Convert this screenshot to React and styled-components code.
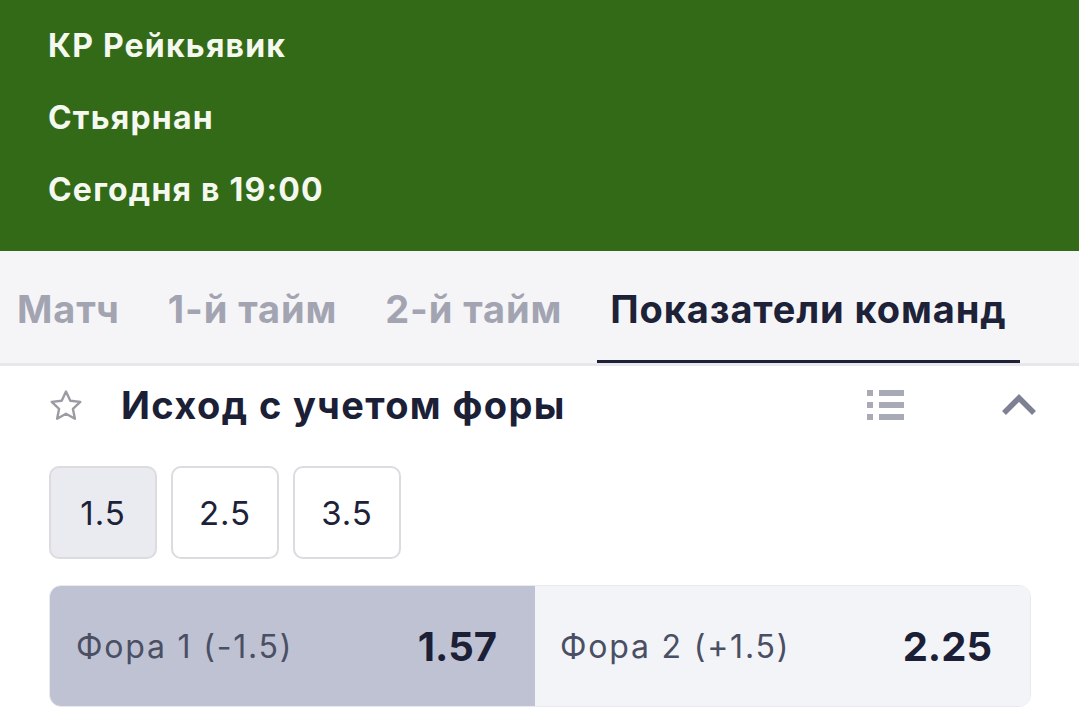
import React from "react";
import styled, { createGlobalStyle } from "styled-components";

const GlobalStyle = createGlobalStyle`
  body {
    margin: 0;
    background: #ffffff;
    font-family: "Inter", "Noto Sans", sans-serif;
    overflow: hidden;
  }
`;

const Page = styled.div`
  width: 1079px;
  height: 722px;
  overflow: hidden;
`;

const MatchHeader = styled.div`
  height: 251px;
  box-sizing: border-box;
  padding: 10px 0 0 48px;
  background: #336a18;
  color: #f4f8ef;
`;

const HeaderLine = styled.div`
  font-size: 32px;
  font-weight: 700;
  letter-spacing: 1.2px;
  line-height: 72px;
`;

const Tabs = styled.div`
  display: flex;
  gap: 22px;
  height: 112px;
  padding-left: 4px;
  background: #f5f5f7;
  border-bottom: 3px solid #e7e7ec;
`;

const Tab = styled.div`
  display: flex;
  align-items: center;
  padding: 6px 13px 0;
  font-size: 38px;
  font-weight: 700;
  letter-spacing: 0.9px;
  color: ${(p) => (p.$active ? "#1d2238" : "#a3a4b2")};
  border-bottom: 3px solid ${(p) => (p.$active ? "#1d2238" : "transparent")};
`;

const Market = styled.div`
  padding: 0 42px 0 49px;
`;

const MarketHead = styled.div`
  display: flex;
  align-items: center;
  height: 78px;
`;

const Title = styled.div`
  flex: 1;
  margin-left: 38px;
  font-size: 38px;
  font-weight: 700;
  letter-spacing: 1.4px;
  color: #1b2036;
`;

const IconButton = styled.div`
  display: flex;
  align-items: center;
  justify-content: center;
  width: ${(p) => p.$w}px;
  margin-right: ${(p) => p.$gap || 0}px;
`;

const Lines = styled.div`
  display: flex;
  gap: 14px;
  margin: 22px 0 26px;
`;

const LineButton = styled.div`
  display: flex;
  align-items: center;
  justify-content: center;
  width: 108px;
  height: 93px;
  box-sizing: border-box;
  border: 2px solid #dcdce0;
  border-radius: 10px;
  background: ${(p) => (p.$active ? "#e9ebf0" : "#ffffff")};
  font-size: 33px;
  letter-spacing: 1px;
  color: #1d2238;
`;

const Outcomes = styled.div`
  display: grid;
  grid-template-columns: 485px 1fr;
  width: 982px;
  height: 122px;
  border-radius: 12px;
  overflow: hidden;
  border: 1px solid #e8eaef;
  box-sizing: border-box;
`;

const Outcome = styled.div`
  display: flex;
  align-items: center;
  justify-content: space-between;
  padding: 0 38px 0 ${(p) => (p.$picked ? 26 : 25)}px;
  background: ${(p) => (p.$picked ? "#bfc2d2" : "#f2f4f8")};
`;

const OutcomeName = styled.span`
  font-size: 32px;
  letter-spacing: 1.8px;
  color: #4a4f64;
`;

const Odds = styled.span`
  font-size: 40px;
  font-weight: 700;
  color: #1b2036;
`;

const StarIcon = () => (
  <svg width="34" height="32" viewBox="0 0 34 32" fill="none">
    <path
      d="M17 2.5l4.3 9.2 10 1.2-7.4 6.9 2 9.9L17 24.8l-8.9 4.9 2-9.9-7.4-6.9 10-1.2z"
      stroke="#9b9ca3"
      strokeWidth="2.4"
      strokeLinejoin="round"
    />
  </svg>
);

const ListIcon = () => (
  <svg width="38" height="30" viewBox="0 0 38 30">
    <g fill="#a8aab5">
      <rect x="0" y="0" width="6" height="6" />
      <rect x="12" y="0" width="25" height="6" />
      <rect x="0" y="12" width="6" height="6" />
      <rect x="12" y="12" width="25" height="6" />
      <rect x="0" y="24" width="6" height="6" />
      <rect x="12" y="24" width="25" height="6" />
    </g>
  </svg>
);

const ChevronUp = () => (
  <svg width="36" height="22" viewBox="0 0 36 22" fill="none">
    <path d="M3 19L18 4l15 15" stroke="#7e8194" strokeWidth="5.5" />
  </svg>
);

const tabs = ["Матч", "1-й тайм", "2-й тайм", "Показатели команд"];
const lines = ["1.5", "2.5", "3.5"];

export default function App() {
  return (
    <Page>
      <GlobalStyle />
      <MatchHeader>
        <HeaderLine>КР Рейкьявик</HeaderLine>
        <HeaderLine>Стьярнан</HeaderLine>
        <HeaderLine>Сегодня в 19:00</HeaderLine>
      </MatchHeader>
      <Tabs>
        {tabs.map((t, i) => (
          <Tab key={t} $active={i === 3}>
            {t}
          </Tab>
        ))}
      </Tabs>
      <Market>
        <MarketHead>
          <StarIcon />
          <Title>Исход с учетом форы</Title>
          <IconButton $w={38} $gap={96}>
            <ListIcon />
          </IconButton>
          <IconButton $w={36}>
            <ChevronUp />
          </IconButton>
        </MarketHead>
        <Lines>
          {lines.map((l, i) => (
            <LineButton key={l} $active={i === 0}>
              {l}
            </LineButton>
          ))}
        </Lines>
        <Outcomes>
          <Outcome $picked>
            <OutcomeName>Фора 1 (-1.5)</OutcomeName>
            <Odds>1.57</Odds>
          </Outcome>
          <Outcome>
            <OutcomeName>Фора 2 (+1.5)</OutcomeName>
            <Odds>2.25</Odds>
          </Outcome>
        </Outcomes>
      </Market>
    </Page>
  );
}
